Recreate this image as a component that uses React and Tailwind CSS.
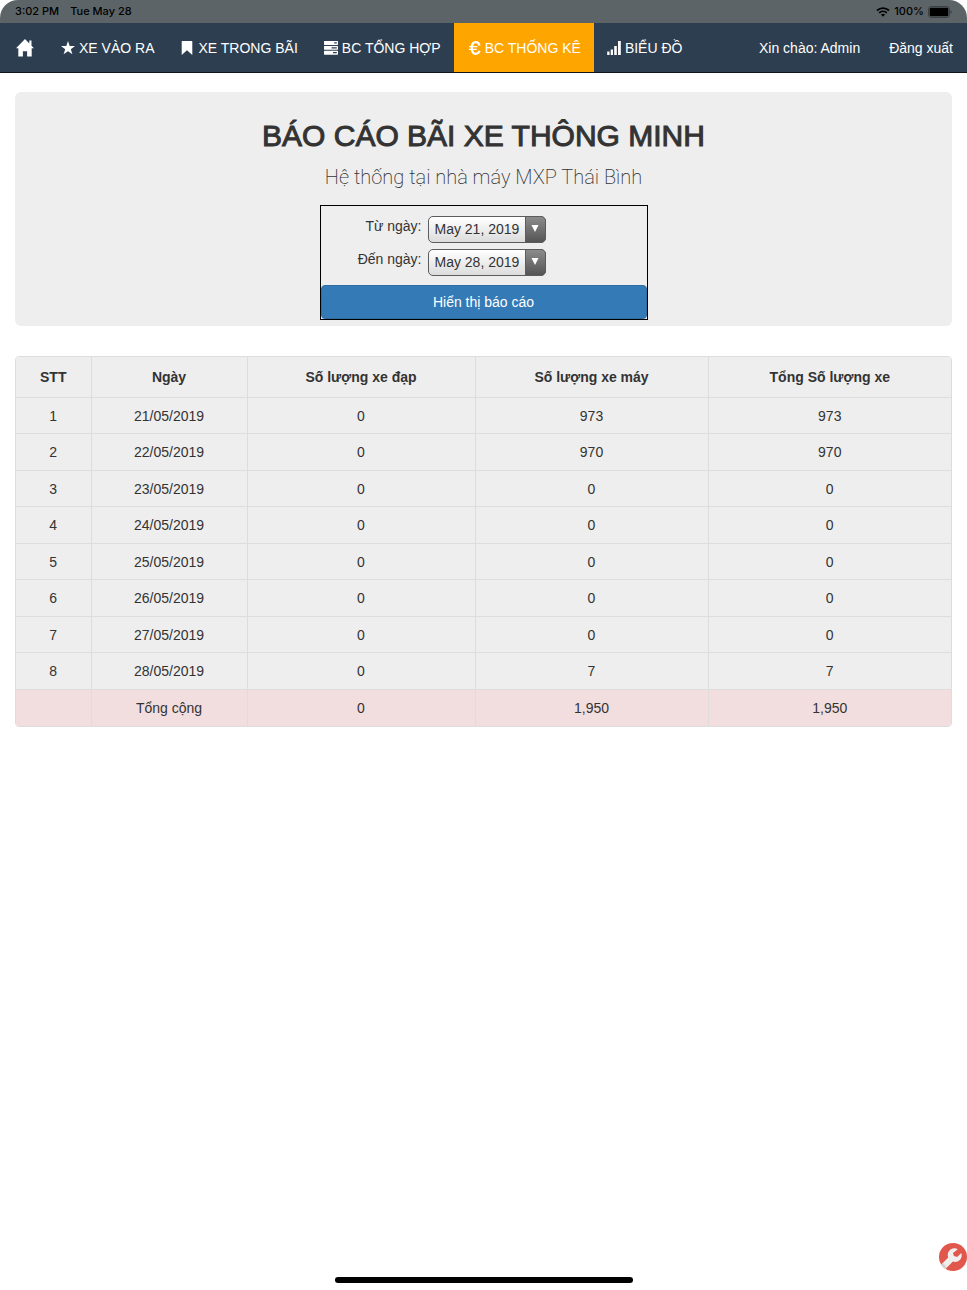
import clsx from "clsx";

const rows = [
  { date: "21/05/2019", bikes: "0", motorbikes: "973", total: "973" },
  { date: "22/05/2019", bikes: "0", motorbikes: "970", total: "970" },
  { date: "23/05/2019", bikes: "0", motorbikes: "0", total: "0" },
  { date: "24/05/2019", bikes: "0", motorbikes: "0", total: "0" },
  { date: "25/05/2019", bikes: "0", motorbikes: "0", total: "0" },
  { date: "26/05/2019", bikes: "0", motorbikes: "0", total: "0" },
  { date: "27/05/2019", bikes: "0", motorbikes: "0", total: "0" },
  { date: "28/05/2019", bikes: "0", motorbikes: "7", total: "7" },
];

function HomeIcon() {
  return (
    <svg viewBox="0 0 18 18" className="h-[18px] w-[18px] fill-current">
      <path d="M9 0 0 9.200h2.300V17.500h4.600v-5.300h4.200v5.300h4.600V9.200H18L15.500 6.700V1.500h-2.200v2.900z" />
    </svg>
  );
}

function StarIcon() {
  return (
    <svg viewBox="0 0 14 14" className="h-[14px] w-[14px] fill-current">
      <path d="M7 0 8.700 4.900l5.300.1-4.200 3.200 1.600 5.100L7 10.200l-4.400 3.100 1.600-5.100L0 5l5.300-.1z" />
    </svg>
  );
}

function BookmarkIcon() {
  return (
    <svg viewBox="0 0 14 14" className="h-[14px] w-[14px] fill-current">
      <path d="M2.300 0h9.400q.6 0 .6.600V14L7 9.300 1.700 14V.6q0-.6.600-.6z" />
    </svg>
  );
}

function TasksIcon() {
  return (
    <svg viewBox="0 0 14 14" className="h-[14px] w-[14px] fill-current">
      <path
        fillRule="evenodd"
        d="M.6 0h12.800q.6 0 .6.600v2.700q0 .6-.6.600H.6Q0 3.900 0 3.300V.6Q0 0 .6 0zM10.200 1.300v1.200h2.600V1.300zM.6 4.900h12.800q.6 0 .6.600v2.700q0 .6-.6.600H.6Q0 8.800 0 8.200V5.500Q0 4.900.6 4.900zM7.500 6.200v1.200h5.300V6.200zM.6 9.800h12.800q.6 0 .6.600v2.700q0 .6-.6.600H.6Q0 13.700 0 13.100v-2.700Q0 9.800.6 9.800zM9 11.100v1.200h3.800v-1.200z"
      />
    </svg>
  );
}

function EuroIcon() {
  return (
    <svg viewBox="0 0 14 14" className="h-[14px] w-[14px]" fill="none" stroke="currentColor">
      <path strokeWidth="2.200" d="M12.500 4.500C12 2.200 10.600 1.200 8.800 1.200 6.200 1.200 4.800 3.600 4.800 7s1.400 5.800 4 5.800c1.800 0 3.200-1 3.700-3" />
      <path strokeWidth="1.300" d="M2.200 5.700h8.200M1.800 8.300h8" />
    </svg>
  );
}

function SignalIcon() {
  return (
    <svg viewBox="0 0 14 14" className="h-[14px] w-[14px] fill-current">
      <path d="M.2 10.500h2.300V14H.2zM3.700 8.500H6V14H3.700zM7.200 5h2.600v9H7.200zM11 0h2.800v14H11z" />
    </svg>
  );
}

function WifiIcon() {
  return (
    <svg viewBox="0 0 14 10" className="h-[10px] w-[14px] fill-none stroke-black" strokeWidth="1.800">
      <path d="M1 3.500c3.400-3.200 8.600-3.200 12 0M3.200 5.900c2.200-2 5.400-2 7.600 0" />
      <path className="fill-black stroke-none" d="M4.900 7.500c1.200-1.100 3-1.100 4.200 0L7 9.700z" />
    </svg>
  );
}

function BatteryIcon() {
  return (
    <svg viewBox="0 0 24 12" className="h-[12px] w-[24px]">
      <rect x=".5" y=".5" width="21" height="11" rx="2.600" fill="none" stroke="#3c4143" />
      <rect x="1.700" y="1.700" width="18.600" height="8.600" rx="1.200" />
      <path d="M22.500 4.200q1.300.4 1.300 1.800t-1.300 1.800z" fill="#3c4143" />
    </svg>
  );
}

const menu = [
  { label: "XE VÀO RA", icon: StarIcon },
  { label: "XE TRONG BÃI", icon: BookmarkIcon },
  { label: "BC TỔNG HỢP", icon: TasksIcon },
  { label: "BC THỐNG KÊ", icon: EuroIcon, active: true },
  { label: "BIỂU ĐỒ", icon: SignalIcon },
];

function StatusBar() {
  return (
    <div className="flex h-[23px] items-center justify-between bg-[#5d6467] px-[15px] font-['Inter',sans-serif] text-[11px] font-medium text-black">
      <div className="flex gap-[11px]">
        <span>3:02 PM</span>
        <span>Tue May 28</span>
      </div>
      <div className="flex items-center gap-1">
        <WifiIcon />
        <span>100%</span>
        <BatteryIcon />
      </div>
    </div>
  );
}

function Navbar() {
  return (
    <nav className="flex h-[50px] justify-between border-b border-[#10151b] bg-[#2d3e50] whitespace-nowrap text-white">
      <div className="flex">
        <a href="#" aria-label="Trang chủ" className="flex items-center pr-[14px] pl-4">
          <HomeIcon />
        </a>
        {menu.map(({ label, icon: Icon, active }) => (
          <a
            key={label}
            href="#"
            className={clsx("flex items-center gap-1 px-[13px]", active && "bg-[#ffa500]")}
          >
            <Icon />
            <span className="pt-px">{label}</span>
          </a>
        ))}
      </div>
      <div className="flex gap-px pt-px">
        <a href="#" className="flex items-center px-[14px]">
          Xin chào: Admin
        </a>
        <a href="#" className="flex items-center px-[14px]">
          Đăng xuất
        </a>
      </div>
    </nav>
  );
}

function DateField({ id, label, value }) {
  return (
    <div className="flex">
      <label htmlFor={id} className="w-[101px] text-right leading-5">
        {label}
      </label>
      <div className="relative ml-[6px]">
        <select
          id={id}
          defaultValue={value}
          className="block h-[27px] w-[118px] appearance-none rounded-[5px] border border-[#5c5c5c] bg-linear-to-b from-white to-[#dcdcdc] pl-[6px] text-[14px] text-[#333]"
        >
          <option>{value}</option>
        </select>
        <span className="pointer-events-none absolute inset-y-0 right-0 flex w-[21px] items-center justify-center rounded-r-[5px] border border-[#5c5c5c] bg-linear-to-b from-[#8c8c8c] to-[#555]">
          <svg viewBox="0 0 8 7" className="mb-[2px] h-[7px] w-[8px] fill-white">
            <path d="M.5 0h7L4 7z" />
          </svg>
        </span>
      </div>
    </div>
  );
}

function ReportHeader() {
  return (
    <section className="flex flex-col items-center rounded-[6px] bg-[#eee] pt-[27px] pb-[6px]">
      <h1 className="text-[30px] leading-[34px] [-webkit-text-stroke:1px_#333]">
        BÁO CÁO BÃI XE THÔNG MINH
      </h1>
      <p className="mt-[10px] font-['Roboto',sans-serif] text-[20px] leading-7 font-extralight">
        Hệ thống tại nhà máy MXP Thái Bình
      </p>
      <form className="mt-[14px] w-[328px] border border-black" onSubmit={(e) => e.preventDefault()}>
        <div className="flex flex-col gap-[6px] pt-[10px] pb-[9px]">
          <DateField id="from" label="Từ ngày:" value="May 21, 2019" />
          <DateField id="to" label="Đến ngày:" value="May 28, 2019" />
        </div>
        <button
          type="submit"
          className="block h-[34px] w-full rounded-[4px] border border-[#2e6da4] bg-[#337ab7] text-white"
        >
          Hiển thị báo cáo
        </button>
      </form>
    </section>
  );
}

function ReportTable() {
  return (
    <div className="mt-[30px] overflow-hidden rounded-[4px] border border-[#ddd]">
      <table className="w-full text-center leading-5 [&_td]:border-t [&_td]:border-[#ddd] [&_td]:pt-px [&_td+td]:border-l [&_th+th]:border-l [&_th+th]:border-[#ddd]">
        <thead className="bg-[#eee]">
          <tr className="h-10">
            <th className="w-[75px]">STT</th>
            <th className="w-[156px]">Ngày</th>
            <th className="w-[228px]">Số lượng xe đạp</th>
            <th className="w-[233px]">Số lượng xe máy</th>
            <th className="w-[243px]">Tổng Số lượng xe</th>
          </tr>
        </thead>
        <tbody className="bg-[#eee]">
          {rows.map((row, i) => (
            <tr key={row.date} className="odd:h-[36px] even:h-[37px]">
              <td>{i + 1}</td>
              <td>{row.date}</td>
              <td>{row.bikes}</td>
              <td>{row.motorbikes}</td>
              <td>{row.total}</td>
            </tr>
          ))}
        </tbody>
        <tfoot className="bg-[#f2dede]">
          <tr className="h-[37px]">
            <td></td>
            <td>Tổng cộng</td>
            <td>0</td>
            <td>1,950</td>
            <td>1,950</td>
          </tr>
        </tfoot>
      </table>
    </div>
  );
}

export default function App() {
  return (
    <div className="flex min-h-screen flex-col bg-white font-['Liberation_Sans',Arial,sans-serif] text-[14px] text-[#333]">
      <div className="overflow-hidden rounded-t-[18px]">
        <StatusBar />
        <Navbar />
      </div>

      <main className="px-[15px] pt-[19px]">
        <ReportHeader />
        <ReportTable />
      </main>

      {/* Settings shortcut */}
      <button
        type="button"
        aria-label="Cài đặt"
        className="fixed right-0 bottom-[19px] h-7 w-7 overflow-hidden rounded-full bg-[#e2574c]"
      >
        <svg viewBox="0 0 28 28" className="h-7 w-7">
          <path
            d="M18.800 6.200c-3-1.700-7-.8-8.900 2-1.300 2-1.500 4.300-.7 6.400L2.300 21.600c1 1.800 2.400 3.300 4.100 4.400l7.500-7.400c2.400.8 5.100.2 6.900-1.600 1.900-1.900 2.400-4.600 1.400-7l-4 4-3.300-.9-.9-3.200z"
            fill="#f1efee"
          />
          <path d="M2.300 21.600l1.700-1.700 4.100 4.400L6.400 26q-2.600-1.800-4.100-4.400z" fill="#d5d3d2" />
        </svg>
      </button>

      {/* Home indicator */}
      <div className="mx-auto mt-auto mb-[7px] h-[6px] w-[298px] rounded-full bg-black" />
    </div>
  );
}
